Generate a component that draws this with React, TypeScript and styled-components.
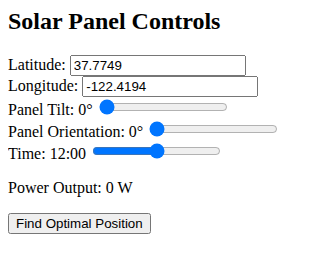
import React, { useState } from "react";
import styled, { createGlobalStyle } from "styled-components";

const Global = createGlobalStyle`
  body {
    margin: 8px;
    font-family: "Liberation Serif", "Times New Roman", serif;
    font-size: 16px;
    color: #000;
    background: #fff;
  }
`;

const Panel = styled.div``;

const Title = styled.h2`
  font-size: 24px;
  font-weight: bold;
  margin: 0 0 20px;
`;

const Row = styled.div``;

const TextInput = styled.input`
  font-family: "Liberation Sans", Arial, sans-serif;
  font-size: 13.33px;
  box-sizing: content-box;
  width: 168px;
`;

const Range = styled.input`
  accent-color: #0075ff;
`;

const Output = styled.p`
  margin: 16px 0;
`;

const Button = styled.button`
  font-family: "Liberation Sans", Arial, sans-serif;
  font-size: 13.33px;
`;

export default function App() {
  const [lat, setLat] = useState("37.7749");
  const [lon, setLon] = useState("-122.4194");
  const [tilt, setTilt] = useState(0);
  const [orient, setOrient] = useState(0);
  const [time, setTime] = useState(12);
  return (
    <Panel>
      <Global />
      <Title>Solar Panel Controls</Title>
      <Row>
        Latitude: <TextInput type="text" value={lat} onChange={(e) => setLat(e.target.value)} />
      </Row>
      <Row>
        Longitude: <TextInput type="text" value={lon} onChange={(e) => setLon(e.target.value)} />
      </Row>
      <Row>
        Panel Tilt: {tilt}° <Range type="range" min={0} max={90} value={tilt} onChange={(e) => setTilt(+e.target.value)} />
      </Row>
      <Row>
        Panel Orientation: {orient}° <Range type="range" min={0} max={360} value={orient} onChange={(e) => setOrient(+e.target.value)} />
      </Row>
      <Row>
        Time: {time}:00 <Range type="range" min={0} max={24} value={time} onChange={(e) => setTime(+e.target.value)} />
      </Row>
      <Output>Power Output: 0 W</Output>
      <Button>Find Optimal Position</Button>
    </Panel>
  );
}
